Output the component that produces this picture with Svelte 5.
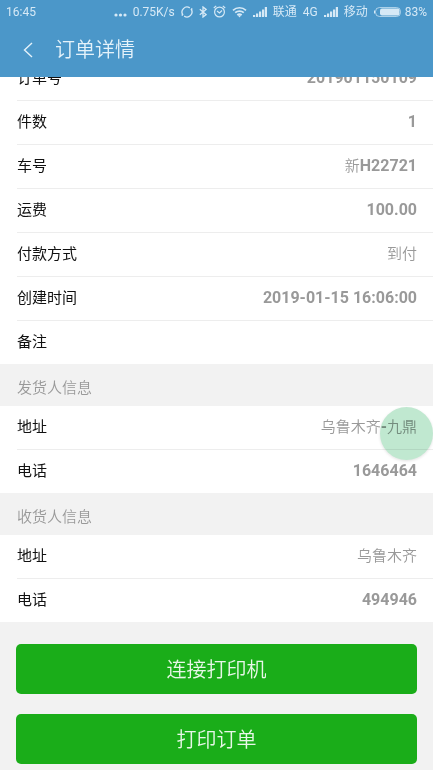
<script>
  const groups = [
    {
      title: '',
      rows: [
        { label: '订单号', value: '201901150109' },
        { label: '件数', value: '1' },
        { label: '车号', value: '新H22721' },
        { label: '运费', value: '100.00' },
        { label: '付款方式', value: '到付' },
        { label: '创建时间', value: '2019-01-15 16:06:00' },
        { label: '备注', value: '' }
      ]
    },
    {
      title: '发货人信息',
      rows: [
        { label: '地址', value: '乌鲁木齐-九鼎' },
        { label: '电话', value: '1646464' }
      ]
    },
    {
      title: '收货人信息',
      rows: [
        { label: '地址', value: '乌鲁木齐' },
        { label: '电话', value: '494946' }
      ]
    }
  ];

  // Latin runs are set bold, Chinese runs light
  const runs = (text) => text.match(/[\x20-\x7e]+|[^\x20-\x7e]+/g) ?? [];
  const isLatin = (text) => /^[\x20-\x7e]/.test(text);
</script>

{#snippet signal()}
  <svg class="signal" width="14" height="10" viewBox="0 0 14 10" fill="currentColor" aria-hidden="true">
    <path d="M0 8h2.2v2H0zM3 6.5h2.2V10H3zM6 4.5h2.2V10H6zM9 2.5h2.2V10H9zM11.8 0H14v10h-2.2z" />
  </svg>
{/snippet}

<div class="app">
  <header>
    <div class="status">
      <span class="clock">16:45</span>
      <svg class="dots" width="13" height="4" viewBox="0 0 13 4" fill="currentColor" aria-hidden="true">
        <circle cx="2" cy="2" r="1.6" /><circle cx="6.5" cy="2" r="1.6" /><circle cx="11" cy="2" r="1.6" />
      </svg>
      <span class="speed">0.75K/s</span>
      <svg width="12" height="12" viewBox="0 0 12 12" fill="none" stroke="currentColor" stroke-width="1.3" aria-hidden="true">
        <path d="M2 9A5 5 0 0 1 8.8 1.9M10 3A5 5 0 0 1 3.2 10.1M2 9H.6M10 3h1.4" />
      </svg>
      <svg width="8" height="12" viewBox="0 0 8 12" fill="none" stroke="currentColor" stroke-width="1.3" aria-hidden="true">
        <path d="M.8 3.3 7 8.6 4 11V1l3 2.4L.8 8.7" />
      </svg>
      <svg width="13" height="13" viewBox="0 0 13 13" fill="none" stroke="currentColor" stroke-width="1.2" aria-hidden="true">
        <circle cx="6.5" cy="7" r="4.9" /><path d="M.8 3 3.2.9M12.2 3 9.8.9M4 6l2.5 2L9 5.5" />
      </svg>
      <svg width="15" height="12" viewBox="0 0 15 12" fill="none" stroke="currentColor" stroke-width="1.7" aria-hidden="true">
        <path d="M1 4.3a9.6 9.6 0 0 1 13 0M3.2 6.7a6.4 6.4 0 0 1 8.6 0M5.3 9a3.3 3.3 0 0 1 4.4 0" />
        <path d="m5.7 9.2 1.8 2.3 1.8-2.3z" fill="currentColor" stroke="none" />
      </svg>
      {@render signal()}
      <span>联通</span>
      <span class="net">4G</span>
      {@render signal()}
      <span>移动</span>
      <svg class="battery" width="27" height="10" viewBox="0 0 27 10" aria-hidden="true">
        <rect x="1.5" y=".5" width="25" height="9" rx="4" fill="none" stroke="currentColor" stroke-opacity=".7" />
        <rect x="6" y="1.5" width="19.5" height="7" rx="2" fill="currentColor" />
        <path d="M.5 3.5v3" stroke="currentColor" />
      </svg>
      <span class="percent">83%</span>
    </div>
    <div class="bar">
      <button class="back" aria-label="返回">
        <svg width="10" height="16" viewBox="0 0 10 16" fill="none" stroke="currentColor" stroke-width="1.4" aria-hidden="true">
          <path d="M9 1 1.5 8 9 15" />
        </svg>
      </button>
      <h1>订单详情</h1>
    </div>
  </header>

  <main>
    {#each groups as group}
      <section>
        {#if group.title}<h2>{group.title}</h2>{/if}
        <dl>
          {#each group.rows as row}
            <div class="row">
              <dt>{row.label}</dt>
              <dd>{#each runs(row.value) as run}<span class:latin={isLatin(run)}>{run}</span>{/each}</dd>
            </div>
          {/each}
        </dl>
      </section>
    {/each}
    <div class="actions">
      <button>连接打印机</button>
      <button>打印订单</button>
    </div>
  </main>

  <button class="assist" aria-label="悬浮球"></button>
</div>

<style>
  :global(body) {
    background: #f2f2f2;
  }
  .app {
    position: relative;
    height: 100vh;
    overflow: hidden;
    background: #f2f2f2;
    font-family: Roboto, "Noto Sans CJK SC", sans-serif;
    font-size: 15px;
  }
  button {
    border: 0;
    padding: 0;
    font: inherit;
    color: inherit;
  }
  header {
    position: relative;
    z-index: 1;
    background: #4b97c9;
    color: #e4f2fa;
  }
  .status {
    display: flex;
    align-items: center;
    height: 22px;
    padding: 1px 6px 0;
    box-sizing: border-box;
    gap: 6px;
    font-size: 12px;
    line-height: 20px;
    color: #d6e9f6;
    white-space: nowrap;
  }
  .clock {
    margin-right: auto;
  }
  .status svg {
    flex: none;
  }
  .dots {
    align-self: flex-end;
    margin-bottom: 5px;
  }
  .percent {
    margin-left: -2px;
  }
  .bar {
    display: flex;
    align-items: center;
    height: 55px;
    padding: 0 16px;
    gap: 15px;
  }
  .back {
    display: grid;
    place-items: center;
    width: 24px;
    height: 40px;
    background: none;
  }
  h1 {
    margin: 0;
    font-size: 20px;
    font-weight: 350;
    line-height: 24px;
  }
  main {
    margin-top: -20px;
  }
  h2 {
    margin: 0;
    padding: 6px 17px 0;
    font-size: 15px;
    font-weight: 350;
    line-height: 36px;
    color: #999;
  }
  dl {
    margin: 0;
    padding-left: 17px;
    background: #fff;
  }
  .row {
    display: flex;
    justify-content: space-between;
    box-sizing: border-box;
    height: 44px;
    padding-right: 16px;
    border-bottom: 1px solid #ededed;
    line-height: 42px;
  }
  .row:last-child {
    height: 43px;
    border-bottom: 0;
  }
  dt {
    color: #111;
  }
  dd {
    margin: 0;
    font-weight: 350;
    color: #999;
  }
  .latin {
    font-size: 16px;
    font-weight: 700;
  }
  .actions {
    display: grid;
    gap: 20px;
    padding: 22px 16px;
  }
  .actions button {
    height: 50px;
    padding-bottom: 2px;
    border-radius: 5px;
    background: #1aad19;
    color: #e8f7e8;
    font-size: 20px;
    font-weight: 350;
  }
  .assist {
    position: absolute;
    z-index: 2;
    top: 407px;
    right: 0;
    width: 53px;
    height: 53px;
    border-radius: 50%;
    background: #c0e8d0;
    mix-blend-mode: multiply;
    box-shadow: 0 1px 3px rgba(0, 0, 0, 0.12);
  }
</style>
